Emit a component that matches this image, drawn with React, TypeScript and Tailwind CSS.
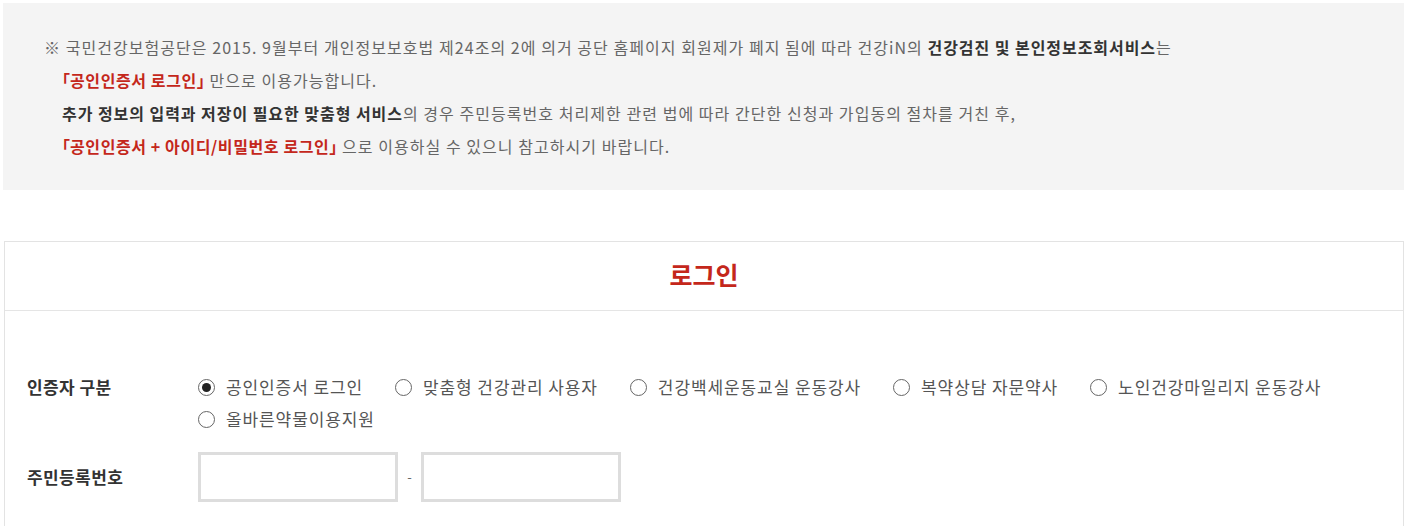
import React from "react";

const font = { fontFamily: '"Noto Sans CJK KR", "Noto Sans", sans-serif' };

function Radio({ label, checked }: { label: string; checked?: boolean }) {
  return (
    <label className="flex items-center mr-[32px] h-[32px] text-[17px] text-[#555] whitespace-nowrap">
      <span className="flex items-center justify-center w-[17px] h-[17px] rounded-full border border-[#666] bg-white">
        {checked && <span className="block w-[9px] h-[9px] rounded-full bg-[#222]" />}
      </span>
      <span className="ml-[11px] tracking-[0.9px]">{label}</span>
    </label>
  );
}

function Bracketed({ children }: { children: React.ReactNode }) {
  return (
    <b className="font-bold text-[#c4271b] tracking-[0.6px]">
      <span className="tracking-normal [font-feature-settings:'halt']">「</span>
      {children}
      <span className="tracking-normal [font-feature-settings:'halt']">」</span>
    </b>
  );
}

export default function App() {
  return (
    <div className="bg-white min-h-[526px] text-[16px]" style={font}>
      <div className="ml-[3px] w-[1401px] pt-[3px]">
        <div className="bg-[#f4f4f4] h-[187px] pt-[28px] pl-[41px] text-[#666] leading-[33px] tracking-[1.05px]">
          <p>
            ※ 국민건강보험공단은 2015. 9월부터 개인정보보호법 제24조의 2에 의거 공단 홈페이지 회원제가 폐지 됨에 따라 건강iN의{" "}
            <b className="font-bold text-[#333] tracking-[0.95px]">건강검진 및 본인정보조회서비스</b>는
          </p>
          <p className="pl-[18px]">
            <Bracketed>공인인증서 로그인</Bracketed> 만으로 이용가능합니다.
          </p>
          <p className="pl-[18px]">
            <b className="font-bold text-[#333] tracking-[0.95px]">추가 정보의 입력과 저장이 필요한 맞춤형 서비스</b>의 경우 주민등록번호 처리제한 관련 법에 따라 간단한 신청과 가입동의 절차를 거친 후,
          </p>
          <p className="pl-[18px]">
            <Bracketed>공인인증서 + 아이디/비밀번호 로그인</Bracketed> 으로 이용하실 수 있으니 참고하시기 바랍니다.
          </p>
        </div>

        <div className="mt-[51px] ml-[1px] w-[1400px] border border-[#e3e3e3] border-b-0">
          <div className="h-[69px] flex items-center justify-center border-b border-[#e5e5e5] pb-[2px]">
            <h2 className="text-[25px] font-bold text-[#c4271b]">로그인</h2>
          </div>
          <div className="pt-[60px] pl-[22px] pr-[24px] pb-[30px]">
            <div className="flex items-start">
              <div className="w-[171px] h-[32px] flex items-center text-[#333] font-bold text-[17px] tracking-[0.4px]">
                인증자 구분
              </div>
              <div className="flex flex-wrap flex-1">
                <Radio label="공인인증서 로그인" checked />
                <Radio label="맞춤형 건강관리 사용자" />
                <Radio label="건강백세운동교실 운동강사" />
                <Radio label="복약상담 자문약사" />
                <Radio label="노인건강마일리지 운동강사" />
                <Radio label="올바른약물이용지원" />
              </div>
            </div>
            <div className="flex items-center mt-[17px]">
              <div className="w-[171px] text-[#333] font-bold text-[17px] tracking-[0.4px]">주민등록번호</div>
              <input className="w-[200px] h-[50px] border-[3px] border-[#dddddd] bg-white outline-none" />
              <span className="w-[23px] text-center text-[#666] text-[13px]">-</span>
              <input className="w-[200px] h-[50px] border-[3px] border-[#dddddd] bg-white outline-none" />
            </div>
          </div>
        </div>
      </div>
    </div>
  );
}
